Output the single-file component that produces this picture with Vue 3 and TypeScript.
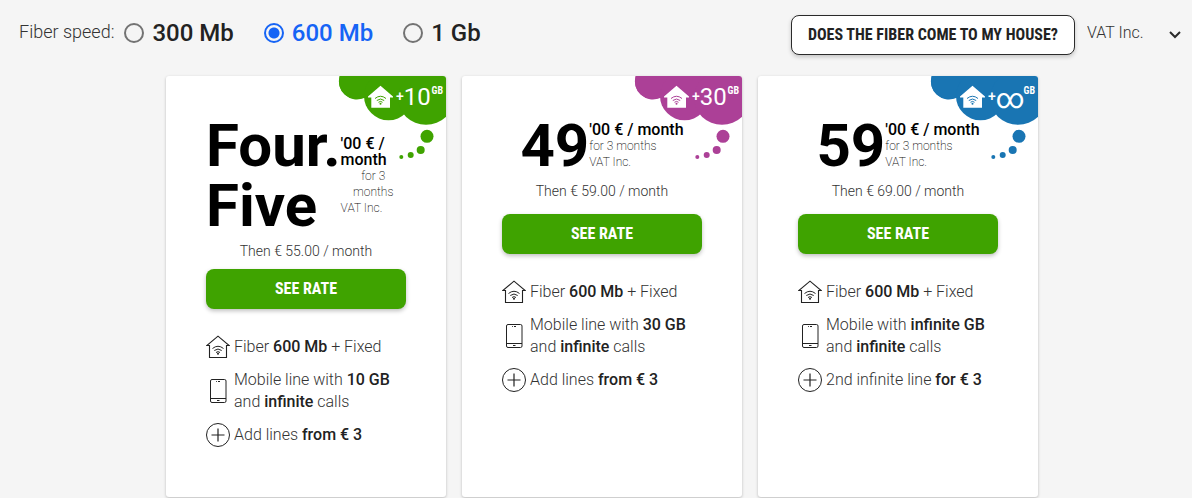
<script setup lang="ts">
import { ref } from 'vue'

interface Part {
  text: string
  strong?: boolean
}

interface Feature {
  icon: 'house' | 'phone' | 'plus'
  lines: Part[][]
}

interface Plan {
  id: string
  price: string
  then: string
  color: string
  extra: string
  features: Feature[]
}

const speeds = ['300 Mb', '600 Mb', '1 Gb']
const speed = ref('600 Mb')
const tax = ref('VAT Inc.')

const fiber: Feature = {
  icon: 'house',
  lines: [[{ text: 'Fiber ' }, { text: '600 Mb', strong: true }, { text: ' + Fixed' }]],
}
const calls: Part[] = [{ text: 'and ' }, { text: 'infinite', strong: true }, { text: ' calls' }]

const plans: Plan[] = [
  {
    id: 'ten',
    price: 'Four. Five',
    then: 'Then € 55.00 / month',
    color: 'green',
    extra: '10',
    features: [
      fiber,
      { icon: 'phone', lines: [[{ text: 'Mobile line with ' }, { text: '10 GB', strong: true }], calls] },
      { icon: 'plus', lines: [[{ text: 'Add lines ' }, { text: 'from € 3', strong: true }]] },
    ],
  },
  {
    id: 'thirty',
    price: '49',
    then: 'Then € 59.00 / month',
    color: 'purple',
    extra: '30',
    features: [
      fiber,
      { icon: 'phone', lines: [[{ text: 'Mobile line with ' }, { text: '30 GB', strong: true }], calls] },
      { icon: 'plus', lines: [[{ text: 'Add lines ' }, { text: 'from € 3', strong: true }]] },
    ],
  },
  {
    id: 'infinite',
    price: '59',
    then: 'Then € 69.00 / month',
    color: 'blue',
    extra: '∞',
    features: [
      fiber,
      { icon: 'phone', lines: [[{ text: 'Mobile with ' }, { text: 'infinite GB', strong: true }], calls] },
      { icon: 'plus', lines: [[{ text: '2nd infinite line ' }, { text: 'for € 3', strong: true }]] },
    ],
  },
]
</script>

<template>
  <div class="page">
    <header class="bar">
      <div class="speeds" role="radiogroup" aria-labelledby="speed-caption">
        <span id="speed-caption" class="caption">Fiber speed:</span>
        <label v-for="s in speeds" :key="s" class="speed" :class="{ active: speed === s }">
          <input v-model="speed" type="radio" name="speed" :value="s" />
          <span>{{ s }}</span>
        </label>
      </div>
      <div class="actions">
        <button type="button" class="coverage">DOES THE FIBER COME TO MY HOUSE?</button>
        <div class="tax">
          <select v-model="tax" aria-label="VAT">
            <option>VAT Inc.</option>
          </select>
          <svg class="chevron" viewBox="0 0 14 10" width="14" height="10" aria-hidden="true">
            <path d="M2 2l5 5 5-5" fill="none" stroke="#2b2b2b" stroke-width="2" />
          </svg>
        </div>
      </div>
    </header>

    <main class="plans">
      <article v-for="plan in plans" :key="plan.id" class="card">
        <div class="badge" :class="plan.color">
          <svg class="cloud" viewBox="0 0 110 90" width="110" height="90" aria-hidden="true">
            <g fill="currentColor">
              <path d="M21 0H110V41L90 38 69 35 50 30 30 22H21z" />
              <path d="M3.7 0A18 18 0 0 0 28 22L40 0z" />
              <circle cx="21" cy="5" r="18" />
              <circle cx="52.500" cy="19.800" r="24.500" />
              <ellipse cx="90" cy="22" rx="28" ry="26.700" />
              <circle cx="91" cy="60.300" r="6.500" />
              <circle cx="84.700" cy="74" r="4" />
              <circle cx="74.700" cy="79" r="3" />
              <circle cx="65.300" cy="81" r="2" />
            </g>
            <path d="M44.500 9.700L32 20.500V21.500H35.300V31.700H54V21.500H57V20.500z" fill="#fff" />
            <g fill="none" stroke="currentColor" stroke-width="1">
              <path d="M39 22.500Q44.500 18 50 22.500" />
              <path d="M40.800 24.500Q44.500 21.500 48.200 24.500" />
              <path d="M42.500 26.300Q44.500 24.500 46.500 26.300" />
            </g>
            <circle cx="44.500" cy="27.700" r="1" fill="currentColor" />
          </svg>
          <div class="extra">
            <span class="sign">+</span>
            <span class="amount" :class="{ infinity: plan.extra === '∞' }">{{ plan.extra }}</span>
          </div>
          <span class="unit">GB</span>
        </div>

        <div class="head">
          <div class="price">
            <div class="figure">{{ plan.price }}</div>
            <div class="terms">
              <strong>'00 € / month</strong>
              <span class="period">for 3 months</span>
              <span>VAT Inc.</span>
            </div>
          </div>
          <p class="then">{{ plan.then }}</p>
        </div>

        <button type="button" class="rate">SEE RATE</button>

        <ul class="features">
          <li v-for="f in plan.features" :key="f.icon">
            <svg viewBox="0 0 24 24" width="24" height="24" fill="none" stroke="#222" aria-hidden="true">
              <g v-if="f.icon === 'house'">
                <path d="M3.500 10.500H.8L12 1.200 23.200 10.500H20.500V22.500H3.500z" stroke-width="1.100" />
                <path d="M6.500 13.500Q12 9 17.500 13.500M8.300 15.500Q12 12.500 15.700 15.500M10 17.500Q12 15.800 14 17.500" />
                <circle cx="12" cy="18.700" r="1" fill="#222" stroke="none" />
              </g>
              <g v-else-if="f.icon === 'phone'">
                <rect x="4.500" y=".5" width="15.500" height="23" rx="1.500" />
                <path d="M4.500 19.500H20M10 2.500H10.800M12 2.500H14M11 21.500H13.500" />
              </g>
              <g v-else>
                <circle cx="12" cy="12" r="11.500" />
                <path d="M5.500 12H18.500M12 5.500V18.500" stroke-width="1.200" />
              </g>
            </svg>
            <span class="copy">
              <span v-for="(line, i) in f.lines" :key="i" class="line"
                ><component :is="p.strong ? 'strong' : 'span'" v-for="(p, j) in line" :key="j">{{ p.text }}</component></span
              >
            </span>
          </li>
        </ul>
      </article>
    </main>
  </div>
</template>

<style>
body {
  background: #f5f5f5;
}
</style>

<style scoped>
.page {
  font-family: Roboto, "Liberation Sans", sans-serif;
  font-weight: 300;
  color: #333;
}
.bar {
  display: flex;
  justify-content: space-between;
  align-items: center;
  padding: 15px 10px 21px 19px;
}
.speeds {
  display: flex;
  align-items: center;
  gap: 30px;
  padding-bottom: 4px;
}
.caption {
  margin-right: -20px;
  padding-bottom: 2px;
  font-size: 18px;
  line-height: 24px;
}
.speed {
  display: flex;
  align-items: center;
  gap: 8px;
  font-size: 24px;
  line-height: 28px;
  font-weight: 500;
  color: #222;
}
.speed input {
  appearance: none;
  flex: none;
  width: 20px;
  height: 20px;
  margin: 0;
  border: 2px solid #737373;
  border-radius: 50%;
}
.speed.active {
  color: #1664f5;
}
.speed input:checked {
  border-color: #1664f5;
  background: radial-gradient(circle, #1664f5 5px, transparent 6px);
}
.actions {
  display: flex;
  align-items: center;
  gap: 12px;
}
.coverage,
.rate {
  height: 40px;
  font-family: "Roboto Condensed", "Liberation Sans Narrow", Roboto, sans-serif;
  font-size: 16px;
  font-weight: 700;
  border-radius: 8px;
  cursor: pointer;
}
.coverage {
  padding: 0 16px 2px;
  color: #222;
  background: #fff;
  border: 1px solid #2b2b2b;
  box-shadow: 0 2px 4px rgba(0, 0, 0, 0.2);
}
.tax {
  position: relative;
}
.tax select {
  appearance: none;
  width: 95px;
  margin: 0;
  padding: 0 0 4px;
  border: 0;
  background: transparent;
  font: 300 16px/22px Roboto, sans-serif;
  color: #333;
}
.chevron {
  position: absolute;
  top: 8px;
  right: 0;
  pointer-events: none;
}
.plans {
  display: grid;
  grid-template-columns: repeat(3, 280px);
  justify-content: center;
  gap: 16px;
  padding: 0 0 1px 12px;
}
.card {
  position: relative;
  padding: 40px 40px 51px;
  background: #fff;
  border-radius: 3px;
  box-shadow: 0 1px 3px rgba(0, 0, 0, 0.24);
}
.badge {
  position: absolute;
  top: 0;
  right: 0;
  width: 110px;
  height: 90px;
  overflow: hidden;
  border-top-right-radius: 3px;
}
.green {
  color: #3fa300;
}
.purple {
  color: #ac4097;
}
.blue {
  color: #1975b3;
}
.cloud {
  display: block;
}
.extra {
  position: absolute;
  top: 8px;
  left: 60px;
  display: flex;
  align-items: flex-start;
  color: #fff;
}
.sign {
  font-size: 14px;
  font-weight: 500;
  line-height: 24px;
}
.amount {
  font-size: 24px;
  font-weight: 400;
  line-height: 26px;
}
.infinity {
  font-size: 28px;
  line-height: 30px;
}
.unit {
  position: absolute;
  top: 8px;
  right: 3px;
  font-family: "Roboto Condensed", "Liberation Sans Narrow", Roboto, sans-serif;
  font-size: 10px;
  font-weight: 700;
  line-height: 13px;
  color: #fff;
}
.head {
  min-height: 90px;
}
.price {
  display: grid;
  grid-template-columns: min-content auto;
  justify-content: center;
  align-items: center;
}
.figure {
  font-size: 60px;
  line-height: 60px;
  font-weight: 700;
  color: #000;
}
.terms {
  display: flex;
  flex-direction: column;
  align-items: flex-start;
  font-size: 12px;
  font-weight: 200;
  line-height: 16px;
  color: #111;
}
.terms strong {
  font-size: 16px;
  font-weight: 500;
  color: #000;
}
.period {
  text-align: center;
}
.then {
  margin: 5px 0 0;
  font-size: 14px;
  line-height: 20px;
  text-align: center;
}
.rate {
  display: block;
  width: 100%;
  margin-top: 8px;
  padding: 0 0 2px;
  border: 0;
  color: #fff;
  background: #3fa300;
  box-shadow: 0 2px 4px rgba(0, 0, 0, 0.25);
}
.features {
  display: grid;
  gap: 11px;
  margin: 27px 0 0;
  padding: 0;
  list-style: none;
  font-size: 16px;
  line-height: 22px;
}
.features li {
  display: flex;
  align-items: center;
  gap: 4px;
}
.features svg {
  flex: none;
  margin: -1px 0;
}
.line {
  display: block;
  white-space: pre;
}
.line strong {
  font-weight: 500;
  color: #222;
}
</style>
